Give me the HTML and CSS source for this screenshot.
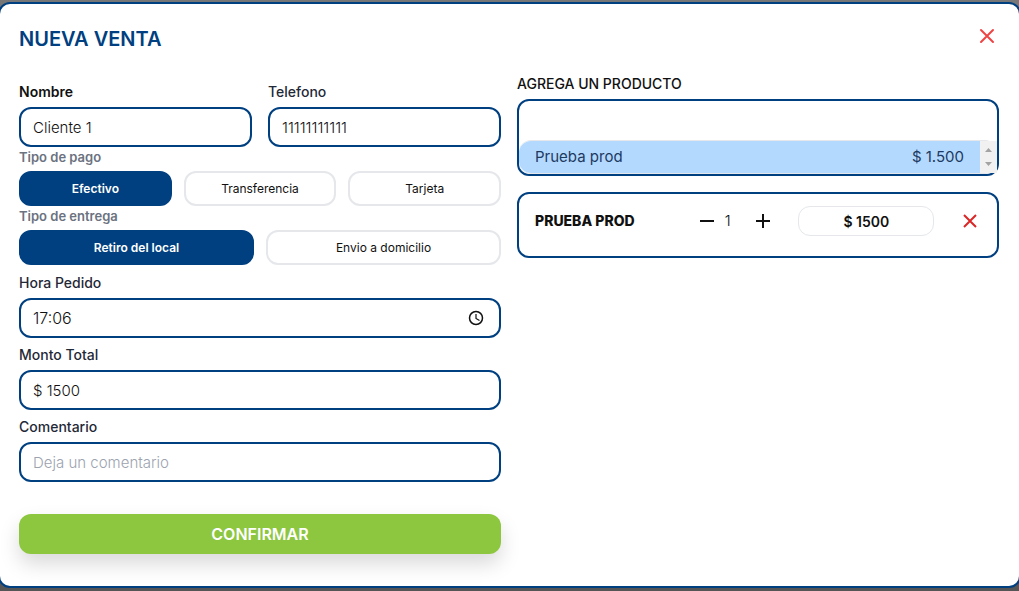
FILE: index.html
```html
<!DOCTYPE html>
<html lang="es">
<head>
<meta charset="utf-8">
<meta name="viewport" content="width=device-width, initial-scale=1">
<title>Nueva venta</title>
<link rel="stylesheet" href="styles.css">
</head>
<body>
<main class="modal">
  <header class="modal-header">
    <h1 class="title">NUEVA VENTA</h1>
    <button class="icon-button close" type="button" aria-label="Cerrar">
      <svg width="24" height="24" viewBox="0 0 24 24" fill="none" stroke="currentColor" stroke-width="2" stroke-linecap="round"><path d="M6 6l12 12M18 6l-12 12"/></svg>
    </button>
  </header>
  <form class="columns">
    <section class="column">
      <div class="pair">
        <div class="field">
          <label class="label strong" for="nombre">Nombre</label>
          <input class="input" id="nombre" type="text" value="Cliente 1">
        </div>
        <div class="field">
          <label class="label" for="telefono">Telefono</label>
          <input class="input" id="telefono" type="text" value="11111111111">
        </div>
      </div>
      <div class="group" role="group" aria-labelledby="pago">
        <span class="label muted" id="pago">Tipo de pago</span>
        <div class="options">
          <button class="option selected" type="button">Efectivo</button>
          <button class="option" type="button">Transferencia</button>
          <button class="option" type="button">Tarjeta</button>
        </div>
      </div>
      <div class="group" role="group" aria-labelledby="entrega">
        <span class="label muted" id="entrega">Tipo de entrega</span>
        <div class="options">
          <button class="option selected" type="button">Retiro del local</button>
          <button class="option" type="button">Envio a domicilio</button>
        </div>
      </div>
      <div class="field stacked first">
        <label class="label" for="hora">Hora Pedido</label>
        <div class="input time">
          <input class="bare" id="hora" type="text" value="17:06">
          <button class="icon-button" type="button" aria-label="Elegir hora">
            <svg width="20" height="20" viewBox="0 0 20 20" fill="none" stroke="currentColor" stroke-width="1.500"><circle cx="9" cy="10" r="6.500"/><path d="M9 6v4.500l3.500 2" stroke-width="1.200"/></svg>
          </button>
        </div>
      </div>
      <div class="field stacked">
        <label class="label" for="monto">Monto Total</label>
        <input class="input" id="monto" type="text" value="$ 1500">
      </div>
      <div class="field stacked">
        <label class="label" for="comentario">Comentario</label>
        <input class="input" id="comentario" type="text" placeholder="Deja un comentario">
      </div>
      <button class="confirm" type="button">CONFIRMAR</button>
    </section>
    <section class="column products">
      <label class="label product-label" for="buscar">AGREGA UN PRODUCTO</label>
      <div class="picker">
        <input class="bare search" id="buscar" type="text">
        <div class="results">
          <button class="result" type="button"><span>Prueba prod</span><span>$ 1.500</span></button>
          <div class="scroller" aria-hidden="true">
            <svg width="7" height="4" viewBox="0 0 7 4"><path d="M0 4L3.500 0 7 4z" fill="#a3a3a3"/></svg>
            <svg width="7" height="4" viewBox="0 0 7 4"><path d="M0 0L3.500 4 7 0z" fill="#a3a3a3"/></svg>
          </div>
        </div>
      </div>
      <div class="item">
        <span class="item-name">PRUEBA PROD</span>
        <div class="quantity">
          <button class="icon-button" type="button" aria-label="Restar">
            <svg width="24" height="24" viewBox="0 0 24 24" fill="none" stroke="currentColor" stroke-width="2"><path d="M5 12h14"/></svg>
          </button>
          <span class="count">1</span>
          <button class="icon-button" type="button" aria-label="Sumar">
            <svg width="24" height="24" viewBox="0 0 24 24" fill="none" stroke="currentColor" stroke-width="2"><path d="M5 12h14M12 5v14"/></svg>
          </button>
        </div>
        <input class="price" type="text" value="$ 1500" aria-label="Precio">
        <button class="icon-button remove" type="button" aria-label="Quitar">
          <svg width="24" height="24" viewBox="0 0 24 24" fill="none" stroke="currentColor" stroke-width="2"><path d="M6 6l12 12M18 6l-12 12"/></svg>
        </button>
      </div>
    </section>
  </form>
</main>
</body>
</html>
```

FILE: styles.css
```css
* { box-sizing: border-box; }

body {
  margin: 0;
  min-height: 100vh;
  padding: 2px 0 3px;
  overflow: hidden;
  display: flex;
  background: linear-gradient(#777, #555);
  font-family: Inter, "Open Sans", sans-serif;
  font-size: 16px;
  line-height: 24px;
  color: #111;
}

button, input {
  font: inherit;
  color: inherit;
  margin: 0;
  padding: 0;
  border: 0;
  background: none;
  min-width: 0;
}

button { cursor: pointer; }

.modal {
  flex: 1;
  margin: 0 -2px;
  padding: 19px 20px 31px 19px;
  background: #fff;
  border: 2px solid #004080;
  border-radius: 12px;
}

.modal-header {
  display: flex;
  justify-content: space-between;
  align-items: flex-start;
  height: 51px;
}

.title {
  margin: 0;
  font-size: 20px;
  line-height: 32px;
  font-weight: 600;
  color: #004080;
}

.icon-button {
  display: flex;
  align-items: center;
  justify-content: center;
}

.close { color: #ef4444; height: 26px; }
.remove { color: #dc2626; }

.columns {
  display: grid;
  grid-template-columns: 1fr 1fr;
  gap: 16px;
}

.column {
  display: flex;
  flex-direction: column;
  min-width: 0;
  padding-top: 8px;
}

.products { padding-top: 0; }

.pair {
  display: grid;
  grid-template-columns: 1fr 1fr;
  gap: 16px;
}

.field {
  display: flex;
  flex-direction: column;
  gap: 5px;
}

.stacked { margin-top: 7px; }
.first { margin-top: 8px; }

.label {
  display: block;
  font-size: 14px;
  line-height: 20px;
  font-weight: 500;
  color: #1f2937;
}

.strong { font-weight: 600; color: #111; }
.muted { font-size: 13px; font-weight: 600; color: #6b7280; }

.input {
  width: 100%;
  height: 40px;
  padding: 0 12px;
  border: 2px solid #004080;
  border-radius: 12px;
  background: #fff;
  font-size: 15px;
  font-weight: 300;
}

.input::placeholder { color: #9ca3af; opacity: 1; }

.time {
  display: flex;
  align-items: center;
  justify-content: space-between;
  font-size: 16px;
}

.bare { flex: 1; }

.group {
  display: flex;
  flex-direction: column;
  gap: 4px;
}

.options { display: flex; gap: 12px; }

.option {
  flex: 1;
  height: 35px;
  border: 2px solid #e5e7eb;
  border-radius: 12px;
  font-size: 12px;
  line-height: 16px;
}

.selected {
  background: #004080;
  border-color: #004080;
  color: #fff;
  font-weight: 600;
}

.confirm {
  height: 40px;
  margin-top: 32px;
  border-radius: 12px;
  background: #8dc63f;
  color: #fff;
  font-size: 16px;
  font-weight: 600;
  box-shadow: 0 10px 20px rgba(0, 0, 0, 0.15);
}

.product-label { color: #111; margin-bottom: 5px; }

.picker {
  display: flex;
  flex-direction: column;
  border: 2px solid #004080;
  border-radius: 12px;
}

.search {
  flex: none;
  height: 39px;
  padding: 0 16px;
}

.results {
  display: flex;
  border: solid #e5e7eb;
  border-width: 1px 0;
  border-radius: 12px;
}

.result {
  flex: 1;
  display: flex;
  justify-content: space-between;
  padding: 4px 16px;
  border-radius: 12px 0 0 12px;
  background: #b3d9ff;
  color: #1e3a5f;
  font-size: 15px;
}

.scroller {
  width: 17px;
  display: flex;
  flex-direction: column;
  align-items: center;
  justify-content: space-between;
  padding: 7px 0;
  background: #f1f1f1;
}

.item {
  display: flex;
  align-items: center;
  justify-content: space-between;
  margin-top: 16px;
  padding: 12px 15px 20px 16px;
  border: 2px solid #004080;
  border-radius: 12px;
}

.item-name {
  width: 136px;
  font-size: 14px;
  font-weight: 800;
}

.quantity { display: flex; align-items: center; }

.count {
  width: 32px;
  padding-left: 6px;
  font-size: 15px;
  font-weight: 300;
}

.price {
  width: 136px;
  height: 30px;
  border: 1px solid #e5e7eb;
  border-radius: 12px;
  text-align: center;
  font-size: 14px;
  font-weight: 600;
}
```
